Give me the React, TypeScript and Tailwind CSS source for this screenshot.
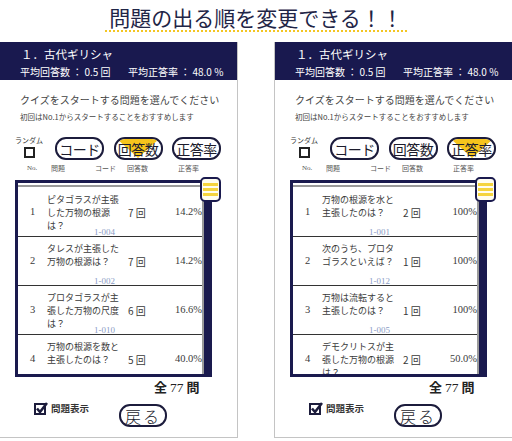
import React from 'react';

type Row = { no: number; q: string[]; code: string; count: string; rate: string };

const leftRows: Row[] = [
  { no: 1, q: ['ピタゴラスが主張', 'した万物の根源', 'は？'], code: '1-004', count: '7', rate: '14.2%' },
  { no: 2, q: ['タレスが主張した', '万物の根源は？'], code: '1-002', count: '7', rate: '14.2%' },
  { no: 3, q: ['プロタゴラスが主', '張した万物の尺度', 'は？'], code: '1-010', count: '6', rate: '16.6%' },
  { no: 4, q: ['万物の根源を数と', '主張したのは？'], code: '1-003', count: '5', rate: '40.0%' },
];

const rightRows: Row[] = [
  { no: 1, q: ['万物の根源を水と', '主張したのは？'], code: '1-001', count: '2', rate: '100%' },
  { no: 2, q: ['次のうち、プロタ', 'ゴラスといえば？'], code: '1-012', count: '1', rate: '100%' },
  { no: 3, q: ['万物は流転すると', '主張したのは？'], code: '1-005', count: '1', rate: '100%' },
  { no: 4, q: ['デモクリトスが主', '張した万物の根源', 'は？'], code: '1-006', count: '2', rate: '50.0%' },
];

function SortButton({ label, active }: { label: string; active: boolean }) {
  return (
    <div className="relative w-[49px] h-[23px] rounded-[11px] border-2 border-[#1c1c3c] bg-white flex items-center justify-center overflow-hidden">
      {active && (
        <svg className="absolute left-[1.5px] top-0" width="42" height="19" viewBox="0 0 42 19">
          <polygon points="0,0 42,0 21,19" fill="#f6c41c" />
        </svg>
      )}
      <span className="relative text-[14px] leading-[16px] text-[#1c1c2c] tracking-[-0.5px]">{label}</span>
    </div>
  );
}

function ListRow({ row }: { row: Row }) {
  return (
    <div className="h-[49px] shrink-0 flex border-b border-[#333] text-[#3a3a3a]">
      <div className="w-[29px] flex items-center justify-center font-['Liberation_Serif',serif] text-[10.5px]">
        {row.no}
      </div>
      <div className="w-[81px] grid">
        <div className="[grid-area:1/1] self-start pt-[5px] text-[9px] leading-[13px] whitespace-nowrap">
          {row.q.map((l, i) => (
            <div key={i}>{l}</div>
          ))}
        </div>
        <div className="[grid-area:1/1] self-end ml-[47px] font-['Liberation_Serif',serif] text-[9px] leading-[8px] text-[#8b9dc6]">
          {row.code}
        </div>
      </div>
      <div className="w-[36px] flex items-center text-[10px]">
        {row.count} 回
      </div>
      <div className="flex-1 flex items-center justify-end font-['Liberation_Serif',serif] text-[10.5px]">
        {row.rate}
      </div>
    </div>
  );
}

function CheckedBox() {
  return (
    <svg width="14" height="13" viewBox="0 0 14 13">
      <rect x="1" y="2" width="10" height="10" fill="none" stroke="#1c1c3c" strokeWidth="2" />
      <path d="M3 6.5 L6 10 L13 1" fill="none" stroke="#1c1c3c" strokeWidth="2.6" />
    </svg>
  );
}

function Panel({ rows, active, className }: { rows: Row[]; active: string; className: string }) {
  return (
    <div className={`w-[238px] flex flex-col bg-white border-b border-[#c4c4c4] ${className}`}>
      <div className="h-[38px] bg-[#19194f] text-white pt-[4px]">
        <div className="pl-[21px] text-[11.5px] leading-[16px]">１．古代ギリシャ</div>
        <div className="mt-[4px] flex pl-[20px] text-[10px] leading-[12px]">
          <span className="w-[108px]">平均回答数 ： 0.5 回</span>
          <span>平均正答率 ： 48.0 %</span>
        </div>
      </div>
      <div className="pt-[13px] pb-[10px] text-[#444]">
        <div className="pl-[20px] text-[10px] leading-[14px]">クイズをスタートする問題を選んでください</div>
        <div className="pl-[20px] mt-[5px] text-[7.5px] leading-[10px]">初回はNo.1からスタートすることをおすすめします</div>
        <div className="mt-[15px] flex items-start pl-[15px]">
          <div className="w-[28px] flex flex-col items-center -mt-[1px]">
            <span className="text-[7px] leading-[8px] text-[#333] whitespace-nowrap">ランダム</span>
            <span className="mt-[3px] w-[11px] h-[11px] border-2 border-[#222]"></span>
          </div>
          <div className="ml-[12px] flex gap-[9.5px]">
            <SortButton label="コード" active={active === 'コード'} />
            <SortButton label="回答数" active={active === '回答数'} />
            <SortButton label="正答率" active={active === '正答率'} />
          </div>
        </div>
        <div className="mt-[4px] flex pl-[27px] text-[7px] leading-[8px] text-[#555]">
          <span className="w-[24px] font-['Liberation_Serif',serif]">No.</span>
          <span className="w-[44px]">問題</span>
          <span className="w-[32px]">コード</span>
          <span className="w-[51px]">回答数</span>
          <span>正答率</span>
        </div>
        <div className="mt-[8px] ml-[15px] w-[197px] h-[197px] border-[3px] border-[#1a1a4e] relative flex">
          <div className="flex-1 flex flex-col overflow-hidden border-r-2 border-[#9a9a9a] pt-[2px]">
            <div className="h-[2px] shrink-0 bg-[#9a9a9a] mb-[1px]"></div>
            {rows.map((r) => (
              <ListRow key={r.no} row={r} />
            ))}
          </div>
          <div className="w-[5px] bg-[#1a1a4e]"></div>
          <div className="absolute left-[182px] top-[-6px] w-[21px] h-[25px] rounded-[5px] border-2 border-[#1a1a4e] bg-[#fffdf0] flex flex-col items-center justify-center gap-[2px]">
            <div className="w-[15px] h-[3px] bg-[#f5d43e]"></div>
            <div className="w-[15px] h-[3px] bg-[#f5d43e]"></div>
            <div className="w-[15px] h-[3px] bg-[#f5d43e]"></div>
          </div>
        </div>
        <div className="mt-[2px] ml-[154px] text-[13px] leading-[16px] text-[#222] flex items-baseline whitespace-nowrap">
          <span className="font-bold">全</span>
          <span className="font-['Liberation_Serif',serif] ml-[3px] mr-[3px] text-[13.5px]">77</span>
          <span className="font-bold">問</span>
        </div>
        <div className="mt-[6px] flex items-start pl-[34px]">
          <div className="w-[85px] flex items-center h-[12px] gap-[3px]">
            <CheckedBox />
            <span className="text-[9.5px] font-bold text-[#333] leading-[12px]">問題表示</span>
          </div>
          <div className="mt-[2px] w-[48px] h-[23px] rounded-[11px] border-2 border-[#1c1c3c] flex items-center justify-center">
            <span className="text-[16px] leading-[18px] font-light text-[#1c1c2c] tracking-[2px]">戻る</span>
          </div>
        </div>
      </div>
    </div>
  );
}

export default function App() {
  return (
    <div className="w-[512px] h-[441px] bg-white overflow-hidden font-['Noto_Sans_CJK_JP',sans-serif]">
      <div className="h-[42px] flex justify-center items-start pt-[4px]">
        <span className="px-[4px] text-[21px] leading-[26px] text-[#1f2547] border-b-2 border-dotted border-[#f3c623] whitespace-nowrap">
          問題の出る順を変更できる！！
        </span>
      </div>
      <div className="flex">
        <Panel rows={leftRows} active="回答数" className="border-r" />
        <Panel rows={rightRows} active="正答率" className="ml-[36px] border-l" />
      </div>
    </div>
  );
}
